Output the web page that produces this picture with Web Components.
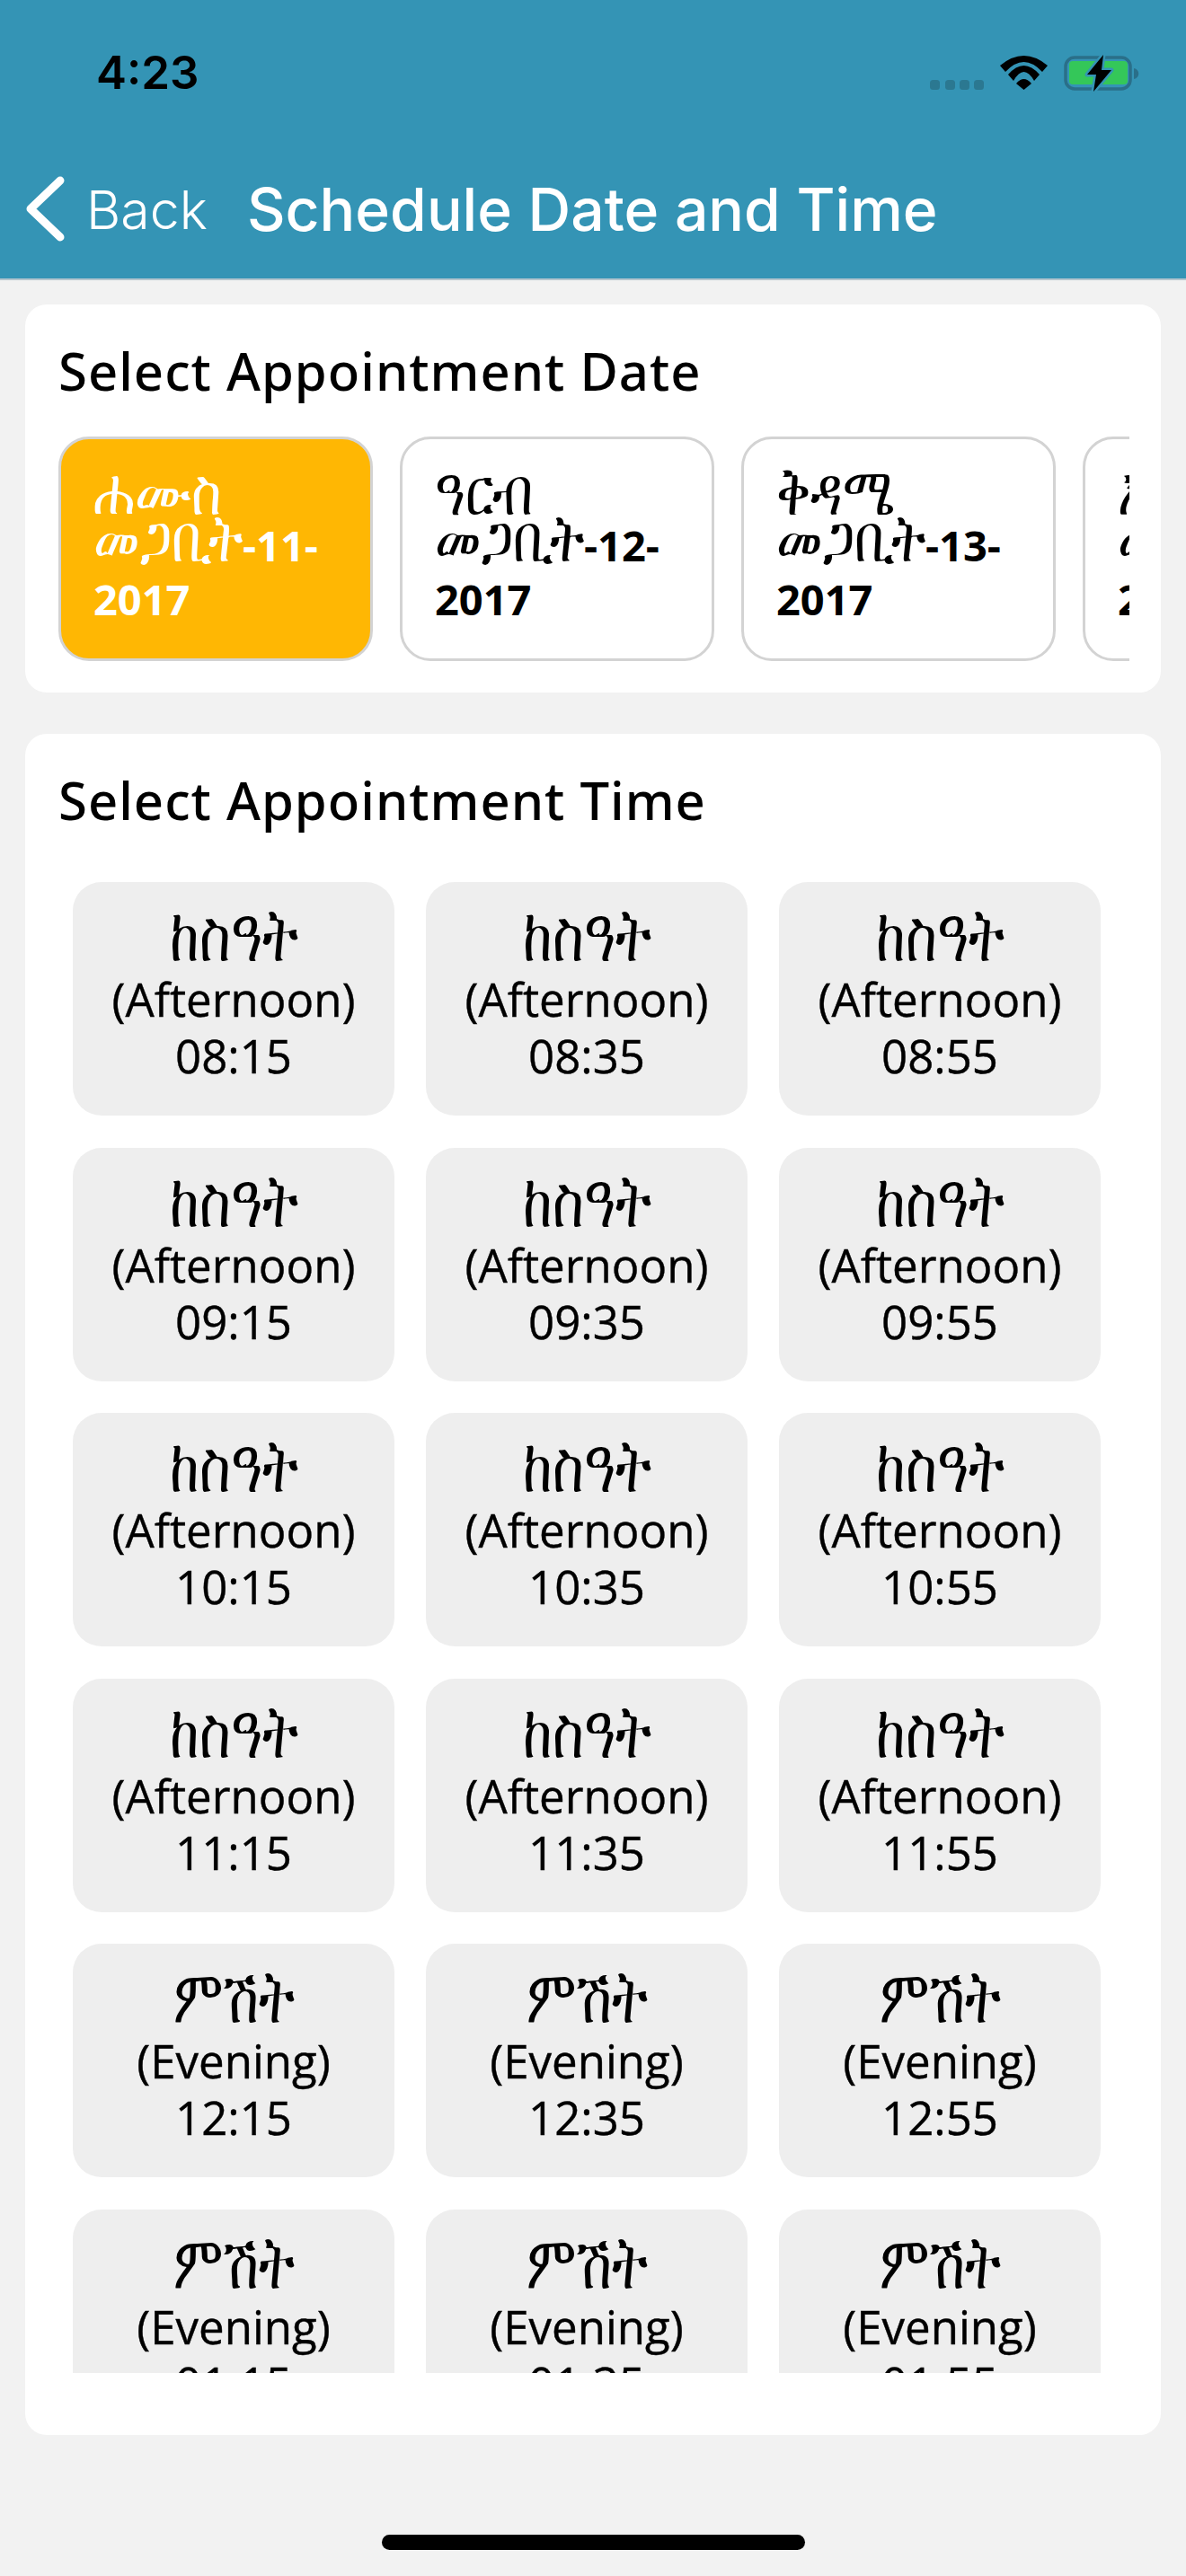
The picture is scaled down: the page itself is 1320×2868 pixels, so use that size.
<!DOCTYPE html>
<html lang="en">

<head>
  <meta charset="UTF-8">
  <title>Schedule Date and Time</title>
  <style>
    html, body { margin: 0; padding: 0; background: #f2f2f2; }
    body { font-family: "Open Sans", "DejaVu Sans", sans-serif; }
  </style>
</head>

<body>

  <schedule-screen>
    <status-bar time="4:23"></status-bar>
    <nav-bar back="Back" title="Schedule Date and Time"></nav-bar>

    <section-card heading="Select Appointment Date" kind="date">
      <date-chip selected day="ሐሙስ" month="መጋቢት" date="-11-2017"></date-chip>
      <date-chip day="ዓርብ" month="መጋቢት" date="-12-2017"></date-chip>
      <date-chip day="ቅዳሜ" month="መጋቢት" date="-13-2017"></date-chip>
      <date-chip day="እሁድ" month="መጋቢት" date="-14-2017"></date-chip>
    </section-card>

    <section-card heading="Select Appointment Time" kind="time" id="times"></section-card>

    <home-bar></home-bar>
  </schedule-screen>

  <script>
    class ScheduleScreen extends HTMLElement {
      connectedCallback() {
        this.attachShadow({ mode: 'open' });
        this.shadowRoot.innerHTML = `
          <style>
            :host { display: flex; flex-direction: column; width: 1320px; height: 2868px; background: #f2f2f2; overflow: hidden; }
          </style>
          <slot></slot>`;
      }
    }

    class StatusBar extends HTMLElement {
      connectedCallback() {
        this.attachShadow({ mode: 'open' });
        this.shadowRoot.innerHTML = `
          <style>
            :host { display: flex; justify-content: space-between; height: 130px; box-sizing: border-box; padding: 56px 40px 0 107px; background: #3494b5; }
            .time { font: 600 51px/50px "Inter", "Liberation Sans", sans-serif; color: #000; }
            svg { display: block; }
          </style>
          <span class="time">${this.getAttribute('time')}</span>
          <svg width="250" height="56" viewBox="0 0 250 56">
            <g fill="#2b7891">
              <rect x="5" y="33" width="11" height="11" rx="3.500"/>
              <rect x="22" y="33" width="11" height="11" rx="3.500"/>
              <rect x="38" y="33" width="11" height="11" rx="3.500"/>
              <rect x="54" y="33" width="11" height="11" rx="3.500"/>
            </g>
            <g fill="#000">
              <path d="M83 17 Q109.500 -5 136 17 L130 24 Q109.500 2 89 24 Z"/>
              <path d="M92 27 Q109.500 7 127 27 L121 34 Q109.500 14 98 34 Z"/>
              <path d="M101 37 Q109.500 27 118 37 L109.500 44 Z"/>
            </g>
            <rect x="156" y="8" width="72" height="35" rx="10" fill="none" stroke="#2a6f89" stroke-width="3.500"/>
            <rect x="160" y="12" width="65" height="26" rx="4" fill="#34c759"/>
            <path d="M232 20 C239 21 239 31 232 32 Z" fill="#2a6f89"/>
            <path d="M198 5 L180 27 L190 27 L187 46 L207 22 L196 22 Z" fill="#000" stroke="#3494b5" stroke-width="5" stroke-linejoin="round" paint-order="stroke"/>
          </svg>`;
      }
    }

    class NavBar extends HTMLElement {
      connectedCallback() {
        this.attachShadow({ mode: 'open' });
        this.shadowRoot.innerHTML = `
          <style>
            :host { display: flex; flex: none; align-items: center; height: 182px; box-sizing: border-box; padding: 26px 0 0 28px; background: #3494b5; border-bottom: 2px solid #b4c6ce; color: #fff; font-family: "Inter", "Liberation Sans", sans-serif; }
            svg { display: block; flex: none; }
            .back { font-size: 59px; font-weight: 300; margin-left: 22px; }
            .title { font-size: 66px; font-weight: 500; margin-left: 44px; white-space: nowrap; }
          </style>
          <svg width="46" height="76" viewBox="0 0 46 76">
            <path d="M39 6 L6 37.500 L39 69" fill="none" stroke="#fff" stroke-width="9" stroke-linecap="round" stroke-linejoin="round"/>
          </svg>
          <span class="back">${this.getAttribute('back')}</span>
          <span class="title">${this.getAttribute('title')}</span>`;
      }
    }

    class SectionCard extends HTMLElement {
      connectedCallback() {
        const isDate = this.getAttribute('kind') === 'date';
        this.attachShadow({ mode: 'open' });
        this.shadowRoot.innerHTML = `
          <style>
            :host { display: block; flex: none; margin: 27px 28px 0; background: #fff; border-radius: 24px; box-sizing: border-box; color: #000; font-family: "Noto Sans", "DejaVu Sans", sans-serif; }
            :host([kind=date]) { height: 432px; padding: 36px 35px 0 37px; }
            :host([kind=time]) { height: 1894px; margin-top: 46px; padding: 36px 35px 0 37px; }
            h2 { margin: 0; font-size: 58px; font-weight: 500; line-height: 76px; letter-spacing: 1px; }
            .row { display: flex; gap: 30px; margin-top: 35px; overflow: hidden; }
            .grid { display: grid; grid-template-columns: repeat(3, 358px); column-gap: 35px; row-gap: 35.500px; margin: 53px 0 0 16px; height: 1660px; overflow: hidden; align-content: start; }
          </style>
          <h2>${this.getAttribute('heading')}</h2>
          <div class="${isDate ? 'row' : 'grid'}"><slot></slot></div>`;
      }
    }

    class DateChip extends HTMLElement {
      connectedCallback() {
        this.attachShadow({ mode: 'open' });
        this.shadowRoot.innerHTML = `
          <style>
            :host { display: flex; flex: none; flex-direction: column; justify-content: center; box-sizing: border-box; width: 350px; height: 250px; padding: 0 30px 8px 36px; border: 3px solid #d3d3d3; border-radius: 34px; background: #fff; color: #000; font: 700 47px/60px "Open Sans", "DejaVu Sans", sans-serif; }
            :host([selected]) { background: #ffb703; color: #fff; }
            .eth { display: inline-block; font: 400 57px/46px "DejaVu Sans", sans-serif; transform: scaleY(1.3); transform-origin: 0 43px; }
            .day { display: block; height: 60px; }
            .day .eth { position: relative; top: 8px; }
          </style>
          <span class="day"><span class="eth">${this.getAttribute('day')}</span></span>
          <span><span class="eth">${this.getAttribute('month')}</span>${this.getAttribute('date')}</span>`;
      }
    }

    class TimeSlot extends HTMLElement {
      connectedCallback() {
        this.attachShadow({ mode: 'open' });
        this.shadowRoot.innerHTML = `
          <style>
            :host { display: flex; flex-direction: column; align-items: center; box-sizing: border-box; height: 260px; padding-top: 36px; border-radius: 32px; background: #eeeeee; color: #000; font: 400 51px/63px "Open Sans", "DejaVu Sans", sans-serif; -webkit-text-stroke: 0.4px #000; }
            .eth { font: 400 59px/63px "DejaVu Sans", sans-serif; -webkit-text-stroke: 0; transform: scaleY(1.4); transform-origin: 50% 52px; }
          </style>
          <span class="eth">${this.getAttribute('part-name')}</span>
          <span>(${this.getAttribute('part-en')})</span>
          <span>${this.getAttribute('clock')}</span>`;
      }
    }

    class HomeBar extends HTMLElement {
      connectedCallback() {
        this.attachShadow({ mode: 'open' });
        this.shadowRoot.innerHTML = `
          <style>
            :host { display: block; flex: none; width: 471px; height: 17px; margin: 111px auto 0; border-radius: 9px; background: #000; }
          </style>`;
      }
    }

    customElements.define('schedule-screen', ScheduleScreen);
    customElements.define('status-bar', StatusBar);
    customElements.define('nav-bar', NavBar);
    customElements.define('section-card', SectionCard);
    customElements.define('date-chip', DateChip);
    customElements.define('time-slot', TimeSlot);
    customElements.define('home-bar', HomeBar);

    // the slot list, hours and minutes repeat so it's built here
    const slots = [
      ['08', 'ከስዓት', 'Afternoon'], ['09', 'ከስዓት', 'Afternoon'], ['10', 'ከስዓት', 'Afternoon'],
      ['11', 'ከስዓት', 'Afternoon'], ['12', 'ምሽት', 'Evening'], ['01', 'ምሽት', 'Evening']
    ];
    const times = document.getElementById('times');
    slots.forEach(function (s) {
      ['15', '35', '55'].forEach(function (m) {
        const el = document.createElement('time-slot');
        el.setAttribute('part-name', s[1]);
        el.setAttribute('part-en', s[2]);
        el.setAttribute('clock', s[0] + ':' + m);
        times.append(el);
      });
    });
  </script>

</body>

</html>
